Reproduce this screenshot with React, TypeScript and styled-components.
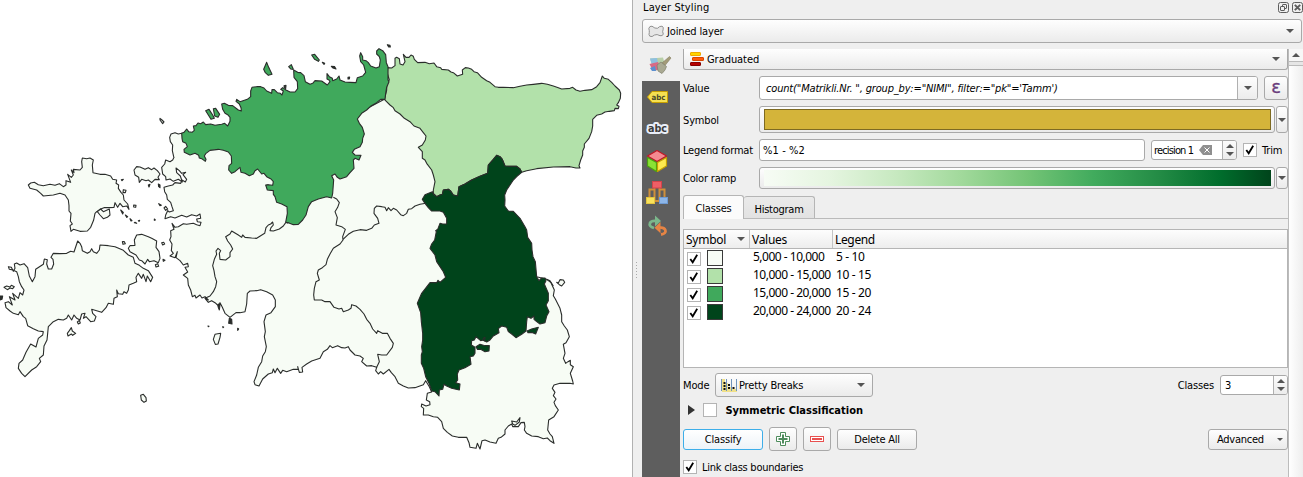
import React from "react";
import styled, { createGlobalStyle, css } from "styled-components";

const Global = createGlobalStyle`
  *, *::before, *::after { box-sizing: border-box; }
  body { margin: 0; background: #fff; overflow: hidden; }
`;

/* ---------- map ---------- */

type Sheet = "A" | "B" | "C" | "D" | "E";
type Line = [Sheet, string][];

// The outlines are digitised on five overlapping sheets at three units per pixel.
const ORIGIN: Record<Sheet, [number, number]> = {
  A: [0, 140],
  B: [160, 30],
  C: [370, 40],
  D: [190, 180],
  E: [390, 230],
};

const toPath = (line: Line, closed = true) => {
  const pts = line.flatMap(([sheet, s]) =>
    s.trim().split(/\s+/).map((p) => {
      const [x, y] = p.split(",").map(Number);
      return `${(ORIGIN[sheet][0] + x / 3).toFixed(2)} ${(ORIGIN[sheet][1] + y / 3).toFixed(2)}`;
    })
  );
  return "M" + pts.join("L") + (closed ? "Z" : "");
};

const MAINLAND: Line = [
  ["B", "65,310 55,312 45,308 33,312 29,322 31,335 38,345 37,362 41,380"],
  ["A", "522,52 518,60 510,65 497,60 494,72 485,82 488,102 497,110 498,120 510,117 520,124 535,118 547,126 541,108 530,98 528,84 538,92 545,100 557,97 549,104 560,118 556,126 546,120 542,130 525,128 518,135 505,138 492,142 494,155 500,165 502,178 512,187 516,200 520,212 508,216 503,212 497,225 495,236 512,230 525,234 545,226 560,231 575,224 590,228 600,222 602,235 590,237 592,245 603,247 600,257 590,254 580,250 560,253 550,251 535,260 525,262 516,250 522,268 512,272 513,290 509,300 516,312 514,332 520,340 510,348 525,353 532,335 528,353 540,362 550,375 563,370 565,380 555,382 563,396 550,405 563,415 565,435 572,450 577,470 585,466 588,474 600,465 606,474 615,470 625,480"],
  ["D", "45,355 55,367 65,362 75,368 86,378 90,368 97,382 105,400 120,412 138,398 150,398 165,395 170,372 172,340 180,333 200,332 212,329 230,335 248,345 256,360 256,380 243,398 228,405 222,425 224,440 226,455 223,470 229,500 226,515 218,528 215,545 205,562 200,585 192,605 195,614 207,618 218,597 235,582 247,578 250,567 255,578 262,565 272,580 278,571 290,575 310,568 325,568 323,560 328,577 338,576 336,562 350,552 365,543 390,535 400,515 412,508 420,497 427,503 443,497 455,503 465,504 475,500 480,510 495,525 510,528 520,535 515,545 530,558 545,557 560,562 557,572 565,582 572,575 580,582 597,568 604,578 615,590 625,610 640,618 655,624 675,623 700,614 707,602"],
  ["E", "118,470 125,486 112,490 109,510 119,515 120,524 108,528 95,522 94,530 101,535 100,555 115,555 130,560 143,562 155,575 160,595 172,607 187,618 205,622 230,622 237,638 240,652 258,655 262,640 270,657 276,632 285,630 300,636 318,640 325,625 333,622 345,612 345,600 355,588 365,582 368,590 385,590 393,578 403,577 405,590 403,600 410,610 425,618 445,620 460,626 472,624 480,632 492,640 487,620 480,612 473,600 476,570 492,560 505,540 496,527 492,517 498,507 490,497 495,487 487,475 492,465 510,460 540,460 550,462 548,453 541,430 550,410 541,404 541,391 534,395 527,400 520,385 525,370 520,343 528,338 538,320 532,300 523,288 515,275 515,255 510,235 496,207 490,197 493,180 483,158 470,148 440,140 300,0"],
  ["C", "300,500 120,200 43,178"],
  ["B", "500,300 200,330"],
];

const HARJU: Line = [
  ["B", "65,310 72,307 80,297 86,305 96,307 103,301 100,288 108,287 114,279 122,281 130,276 137,284 152,282 165,286 185,283 194,280 203,288 210,274 210,262 203,254 195,250 188,238 185,222 193,220 205,226 218,227 235,240 244,243 243,233 238,222 228,214 230,208 240,215 262,208 272,200 272,183 276,172 290,170 302,170 312,174 320,183 335,190 336,179 343,179 352,188 361,190 366,195 370,183 362,178 368,173 378,180 390,186 405,186 413,176 412,155 402,142 401,120 413,127 422,128 432,137 436,155 450,163 458,160 465,152 485,153 502,165 510,155 507,150 501,147 501,131 508,140 517,145 518,152 530,147 537,138 540,150 555,156 570,157 588,158 592,143 608,138 617,127 611,105 602,95 599,78 602,68 608,80 608,90 618,92 625,98 632,108 648,114 658,110 661,90 658,80 650,72 650,63 657,56 668,62 677,74 679,98 684,110 684,150 687,155 680,172 677,190 675,208 662,208 650,218 634,227 620,240 605,250 592,267 598,280 607,292 613,312 608,325 607,337 600,350 583,358 577,367 585,375 603,376 597,390 585,385 580,390 582,415 570,428 560,440 540,447 532,442 525,432 515,437 521,450 518,490 515,504 500,500 475,507 455,515 445,530 438,555 428,570 415,583 400,584 385,578 377,577 382,550 381,530 365,522 350,517 345,500 340,493 340,482 322,480 317,465 325,464 338,466 340,455 333,447 320,440 312,430 305,432 293,417 285,422 280,432 268,437 255,430 243,427 240,412 225,425 215,430 206,420 207,407 215,400 214,378 205,366 190,361 175,358 150,361 138,370 133,378 138,388 136,394 125,386 118,384 116,376 105,370 90,375 73,367 72,358 82,350 78,340 68,335 66,325"],
];

const VIRU: Line = [
  ["C", "53,83 65,84 75,77 75,55 80,52 88,56 90,72 99,75 105,65 100,43 108,52 117,52 123,45 130,49 133,58 143,68 165,67 178,71 192,69 200,80 212,83 215,88 235,90 243,96 250,98 262,108 278,103 277,90 286,83 295,84 305,88 312,95 322,98 335,112 350,122 360,127 375,140 385,142 400,142 430,143 450,139 470,135 490,133 515,130 532,133 550,138 565,143 575,147 600,145 608,142 618,150 630,154 645,151 665,149 680,140 690,128 697,108 703,115 715,118 725,127 735,138 748,150 752,160 751,175 745,188 740,195 747,199 745,206 735,205 733,212 718,214 705,216 695,222 680,226 668,238 668,258 665,275 657,295 643,312 643,322 638,333 638,345 632,360 627,377 630,384 618,384 600,380 550,381 500,386 470,392 455,397 450,387 440,379 420,379 405,378 397,358 390,350 380,346 370,358 355,375 353,400 330,409 305,420 285,432 267,440 263,468 250,465 241,452 235,448 220,450 217,463 210,465 200,470 190,460 190,450 195,425 190,405 185,390 170,370 165,360 157,355 157,335 145,322 157,315 166,300 168,288 160,278 150,265 132,258 120,245 103,235 90,222 75,212 70,203 60,195 43,178 50,150 50,130 58,120 52,100"],
];

const TARTU: Line = [
  ["C", "187,455 190,462 200,470 210,465 217,463 220,450 235,448 241,452 250,465 263,468 267,440 285,432 305,420 330,409 353,400 355,375 370,358 380,346 390,350 397,358 405,378 420,379 440,379 450,387 455,397 440,410 430,420 410,450 404,465 405,480 404,498 415,513 430,514 450,535"],
  ["E", "405,-10 410,0 413,22 425,40 426,60 429,80 436,95 440,140 447,152 455,144 465,144 468,152 463,162 475,190 475,212 468,225 477,245 470,258 465,278 450,282 440,275 432,268 432,258 423,265 412,260 410,275 408,303 395,313 378,323 365,312 355,305 350,292 335,288 325,296 327,308 310,318 300,330 290,336 280,330 272,332 258,320 253,330 245,332 244,345 255,352 255,370 250,378 240,380 243,403 225,413 207,420 202,432 203,450 197,458 210,462 208,480 185,475 170,468 162,463 158,478 148,480 147,498 135,485 125,483 118,462 107,440 101,415 94,400 94,375 97,365 95,350 98,330 98,310 94,275 92,248 82,220 95,190 120,158 140,158 144,151 150,157 167,142 160,125 150,110 140,95 135,75 120,55 125,42 134,30 139,5"],
  ["C", "197,572 203,568 210,550 218,552 230,552 230,535 220,517 210,513 185,513 175,503 165,490 157,478 165,464"],
];

const ISLANDS: Line[] = [
  [["A", "85,135 92,129 103,127 115,134 130,137 150,133 165,136 178,131 190,140 198,135 198,122 212,127 203,103 214,112 220,105 214,90 222,98 220,88 240,90 247,82 245,65 247,54 260,56 270,54 280,60 277,75 279,98 300,103 315,103 332,108 338,118 350,120 348,130 356,135 355,145 363,157 370,165 372,180 383,192 387,208 380,198 368,200 360,190 353,202 345,188 342,202 325,203 312,203 300,208 290,215 285,220 281,240 272,262 262,273 240,274 220,268 213,274 210,257 217,252 211,243 213,220 207,213 207,197 205,180 195,165 180,160 160,165 130,168 122,160 110,150 90,145"]],
  [["A", "292,215 302,207 310,215 328,207 330,225 322,232 310,236 300,225"]],
  [["A", "402,90 410,80 420,81 435,88 445,83 455,89 462,84 472,92 480,102 474,112 478,119 465,118 455,128 445,120 438,122 425,118 418,127 416,112 405,105"]],
  [["A", "25,380 34,382 40,394 45,385 43,372 50,369 60,375 72,371 83,383 88,408 97,425 105,410 107,388 130,373 133,357 142,359 140,372 145,387 155,387 161,372 159,358 153,352 160,340 180,341 200,340 212,334 222,336 228,318 233,303 240,310 245,320 247,332 262,340 270,335 275,326 280,335 290,340 298,330 300,315 325,317 345,320 370,331 385,345 400,352 405,370 418,376 430,385 445,392 458,412 452,425 442,408 438,425 430,403 425,415 415,400 408,412 410,425 400,430 387,435 385,450 380,460 372,455 368,463 355,461 350,450 352,470 342,475 340,493 325,490 318,503 305,517 290,512 275,508 278,520 288,530 283,543 272,545 258,530 250,535 255,520 245,522 240,540 230,535 222,525 215,540 205,525 200,535 190,540 175,538 160,545 145,560 143,580 141,600 132,618 130,645 118,655 122,665 110,680 95,690 75,710 65,700 55,685 57,670 68,660 78,637 92,612 108,621 115,595 128,585 130,575 115,573 100,566 83,557 77,535 70,530 60,515 55,524 40,520 30,513 18,503 15,488 25,485 37,495 28,470 45,480 38,460 55,475 60,458 68,465 72,450 65,440 58,425 55,410 50,395 38,390 28,388"]],
  [["A", "385,325 390,317 405,316 403,300 410,285 425,283 445,290 455,295 470,303 468,322 477,335 480,355 475,368 462,362 448,365 443,358 435,372 425,362 418,360 408,345 390,335"]],
  [["A", "12,442 20,438 30,441 34,436 43,440 38,446 30,444 22,449"]],
  [["A", "202,580 208,572 214,563 217,573 227,580 218,586 214,582 204,588"]],
  [["A", "422,766 430,763 438,773 439,783 432,787 424,780"]],
  [["A", "367,305 373,305 376,311 369,313"]],
  [["A", "485,308 491,307 494,312 488,315"]],
  [["A", "370,149 378,151 376,158 369,158"]],
  [["A", "401,195 408,196 407,202 401,201"]],
  [["A", "232,546 238,541 241,549 235,552"]],
  [["A", "466,374 473,371 476,379 468,381"]],
  [["A", "489,358 495,361 490,364"]],
  [["A", "492,204 497,199 503,207 497,211"]],
  [["D", "70,478 75,463 92,460 90,472 84,492 76,493"]],
  [["E", "500,157 505,159 510,149 520,150 524,157 515,168 508,164"]],
  [["E", "365,573 380,576 390,563 388,576 375,586 368,582"]],
  [["B", "0,265 6,270 12,276 8,281 0,270"]],
];

const HARJU_ISLES: Line[] = [
  [["B", "311,118 320,97 326,112 336,133 325,136 316,128"]],
  [["B", "137,242 147,238 158,255 163,265 153,268"]],
  [["B", "160,236 167,235 179,253 174,262 164,258"]],
  [["B", "455,75 464,73 478,90 475,94 464,88"]],
  [["B", "386,110 394,104 400,118 392,117"]],
];

const ROCKS: Line[] = [
  [["B", "682,44 690,46 691,51 686,51"]],
  [["B", "514,109 524,110 528,117 519,114"]],
  [["B", "487,97 494,100 492,103"]],
  [["B", "564,142 569,141 568,147 564,147"]],
  [["B", "372,167 378,166 377,176 373,173"]],
  [["A", "475,132 480,135 480,143 476,140"]],
  [["A", "364,119 370,118 366,122"]],
  [["A", "362,210 370,217 368,222"]],
  [["A", "376,225 383,230 380,232"]],
  [["A", "390,236 396,242 393,243"]],
  [["A", "403,248 410,250 405,247"]],
  [["A", "476,191 484,196 480,197"]],
  [["A", "463,237 466,240 463,241"]],
  [["A", "415,242 419,241 417,244"]],
  [["A", "0,468 8,468 6,478 0,480"]],
  [["A", "445,135 450,133 447,141"]],
  [["D", "85,372 90,375 88,390 84,380"]],
  [["D", "118,415 125,418 126,432 116,430"]],
  [["D", "54,438 57,439 55,440"]],
  [["D", "98,440 101,441 99,443"]],
  [["D", "143,445 146,447 143,451"]],
];

const TARTU_ISLES: Line[] = [
  [["E", "258,350 270,343 285,347 298,347 297,363 285,365 272,358 262,358"]],
  [["E", "411,303 425,297 445,292 437,312 428,308 414,308"]],
  [["E", "280,325 285,322 284,333 279,331"]],
];

const BORDERS: Line[] = [
  [["D", "287,128 280,138 268,147 250,153 240,152 243,143 250,135 248,126 242,132 235,135 228,143 224,160 212,167 200,175 185,174 165,172 158,165 155,172 145,165 125,153 120,162 107,170 113,183 122,195 128,207 120,218 120,230 107,240 90,238 88,220 92,212 84,205 78,213 80,223 73,238 68,257 72,272 75,290 80,305 77,320 70,335 60,348 45,355"]],
  [["D", "430,52 440,57 448,68 443,82 435,95 442,113 438,135 455,140 466,148 458,170 459,180 450,192 430,205 420,222 412,238 408,254 397,263 385,270 382,280 388,300 378,305 373,325 371,345 373,360 395,360 405,365 420,365 432,382 447,387 455,385 460,395 475,390 483,385 485,374 498,378 510,388 522,402 530,418 540,430 548,447 560,460 563,452 577,460 592,460 600,475 610,490 607,502 590,525 575,525 563,523 568,545 560,562"]],
  [["D", "459,178 475,163 490,154 510,149 530,151 545,145 553,135 567,130 563,115 552,100 553,85 560,78 575,80 585,82 590,92 595,83 603,92 610,85 620,90 632,104 640,107 650,100 655,88 665,86 675,78 690,73 708,70"]],
  [["B", "377,577 385,580"]],
  [["E", "470,148 480,152 490,168"]],
];

const MapCanvas = styled.svg`
  display: block;
  width: 632px;
  height: 477px;
  flex: none;
  background: #fff;
  stroke: #2a2d2b;
  stroke-width: 1.1;
  stroke-linejoin: round;
`;

const Shapes = ({ lines, fill, closed = true }: { lines: Line[]; fill: string; closed?: boolean }) => (
  <g fill={fill}>
    {lines.map((l, i) => (
      <path key={i} d={toPath(l, closed)} />
    ))}
  </g>
);

const CountyMap = () => (
  <MapCanvas viewBox="0 0 632 477">
    <Shapes lines={[MAINLAND, ...ISLANDS]} fill="#f7fcf5" />
    <Shapes lines={[VIRU]} fill="#b2e1aa" />
    <Shapes lines={[HARJU, ...HARJU_ISLES]} fill="#40a95c" />
    <Shapes lines={[TARTU, ...TARTU_ISLES]} fill="#00441b" />
    <Shapes lines={BORDERS} fill="none" closed={false} />
    <Shapes lines={ROCKS} fill="#2a2d2b" />
  </MapCanvas>
);

/* ---------- panel parts ---------- */

const Window = styled.main`
  display: flex;
  width: 1303px;
  height: 477px;
  overflow: hidden;
`;

const Panel = styled.aside`
  display: flex;
  flex-direction: column;
  width: 671px;
  height: 477px;
  border-left: 1px solid #b1b1b1;
  background: #efefef;
  color: #000;
  font: 11px/14px "DejaVu Sans Condensed", "DejaVu Sans", sans-serif;
  font-stretch: condensed;
  position: relative;
`;

const Text = styled.span<{ $ls?: number; $size?: number; $segoe?: boolean; $bold?: boolean; $italic?: boolean }>`
  display: inline-block;
  padding-top: 2px;
  white-space: pre;
  letter-spacing: ${(p) => p.$ls ?? -0.15}px;
  font-size: ${(p) => p.$size ?? 11}px;
  ${(p) => p.$segoe && css`font-family: "Noto Sans", "Open Sans", sans-serif; font-stretch: normal;`}
  ${(p) => p.$bold && css`font-weight: 700;`}
  ${(p) => p.$italic && css`font-style: italic;`}
`;

const TitleBar = styled.header`
  display: flex;
  align-items: center;
  height: 19px;
  padding: 0 0 5px 10px;
  svg { margin-left: 3px; }
  svg:first-of-type { margin-left: auto; }
`;

const raised = css`
  border: 1px solid #a9a9a9;
  border-radius: 3px;
  background: linear-gradient(#fefefe, #ebebeb);
`;

const Combo = styled.div<{ $w?: number; $h?: number; $clip?: boolean; $gap?: number; $pl?: number; $pr?: number }>`
  ${raised}
  display: flex;
  align-items: center;
  width: ${(p) => (p.$w ? p.$w + "px" : "auto")};
  height: ${(p) => p.$h ?? 24}px;
  padding: 0 ${(p) => p.$pr ?? 7}px 0 ${(p) => p.$pl ?? 5}px;
  gap: ${(p) => p.$gap ?? 3}px;
  ${(p) => p.$clip && css`border-top: 0; border-radius: 0 0 3px 3px;`}
  > :last-child { margin-left: auto; }
`;

const Arrow = styled.i<{ $up?: boolean; $s?: number }>`
  display: block;
  flex: none;
  width: 0;
  height: 0;
  border: ${(p) => p.$s ?? 4}px solid transparent;
  ${(p) =>
    p.$up
      ? css`border-top: 0; border-bottom-color: #555;`
      : css`border-bottom: 0; border-top-color: #555;`}
`;

const LayerRow = styled.div`
  padding: 0 1px 0 9px;
  height: 30px;
`;

const Body = styled.div`
  display: flex;
  flex: 1;
  min-height: 0;
  padding-left: 9px;
`;

const SideBar = styled.nav`
  display: flex;
  flex-direction: column;
  width: 38px;
  background: linear-gradient(#efefef 32px, #5e5e5e 32px);
  svg { display: block; }
`;

const Form = styled.section`
  display: flex;
  flex-direction: column;
  width: 605px;
  margin-left: 3px;
`;

const ScrollBar = styled.div`
  width: 15px;
  border-left: 1px solid #bcbcbc;
  background: linear-gradient(90deg, #fff, #eee);
  display: flex;
  flex-direction: column;
  align-items: center;
`;

const ScrollButton = styled.div`
  display: flex;
  align-items: center;
  justify-content: center;
  width: 100%;
  height: 13px;
  border-bottom: 1px solid #bbb;
  background: #f7f7f7;
`;

const ScrollThumb = styled.div`
  width: 100%;
  height: 4px;
  background: #e6e6e6;
  border-bottom: 1px solid #bbb;
`;

const Row = styled.div<{ $h: number; $mt?: number }>`
  display: flex;
  align-items: center;
  flex: none;
  height: ${(p) => p.$h}px;
  margin-top: ${(p) => p.$mt ?? 0}px;
`;

const Caption = styled.label`
  display: flex;
  width: 76px;
  flex: none;
`;

const Field = styled.div<{ $w: number; $h: number; $ml?: number; $pl?: number }>`
  display: flex;
  align-items: stretch;
  flex: none;
  width: ${(p) => p.$w}px;
  height: ${(p) => p.$h}px;
  margin-left: ${(p) => p.$ml ?? 0}px;
  padding-left: ${(p) => p.$pl ?? 3}px;
  border: 1px solid #a9a9a9;
  border-radius: 3px;
  background: #fff;
  > span { align-self: center; }
`;

const Steps = styled.div<{ $w: number }>`
  display: flex;
  flex-direction: column;
  align-items: center;
  justify-content: center;
  gap: 4px;
  width: ${(p) => p.$w}px;
  margin-left: auto;
  border-left: 1px solid #b0b0b0;
  border-radius: 0 2px 2px 0;
  background: linear-gradient(#fcfcfc, #ececec);
`;

const ClearSlot = styled.div`
  display: flex;
  align-items: center;
  margin-left: auto;
  margin-right: 10px;
  & + ${Steps} { margin-left: 0; }
`;

const Button = styled.button<{ $w: number; $h?: number; $ml?: number; $focus?: boolean }>`
  ${raised}
  display: flex;
  align-items: center;
  justify-content: center;
  flex: none;
  width: ${(p) => p.$w}px;
  height: ${(p) => p.$h ?? 21}px;
  margin: 0 0 0 ${(p) => p.$ml ?? 0}px;
  padding: 0;
  color: #000;
  font: inherit;
  ${(p) => p.$focus && css`border-color: #3daee9; background: linear-gradient(#fff, #edf3f8);`}
`;

const MenuButton = styled(Button)`
  justify-content: space-between;
  padding: 0 4px 0 8px;
`;

const SwatchButton = styled.div<{ $h: number }>`
  ${raised}
  flex: none;
  width: 516px;
  height: ${(p) => p.$h}px;
  padding: 2px 3px 2px 4px;
`;

const Swatch = styled.div<{ $bg: string; $line?: string }>`
  height: 100%;
  background: ${(p) => p.$bg};
  border: ${(p) => (p.$line ? `1px solid ${p.$line}` : "0")};
`;

const Check = styled.div<{ $ml?: number }>`
  width: 14px;
  height: 14px;
  flex: none;
  margin-left: ${(p) => p.$ml ?? 0}px;
  border: 1px solid #b4b4b4;
  background: #fff;
  svg { display: block; }
  & + ${Text} { margin-left: 5px; }
`;

const Tabs = styled.div`
  display: flex;
  align-items: flex-end;
  flex: none;
  height: 24px;
  margin-top: 6px;
  border-bottom: 1px solid #bababa;
`;

const Tab = styled.div<{ $active?: boolean }>`
  display: flex;
  align-items: center;
  justify-content: center;
  width: ${(p) => (p.$active ? 61 : 71)}px;
  height: ${(p) => (p.$active ? 24 : 22)}px;
  padding-top: ${(p) => (p.$active ? 0 : 2)}px;
  margin-bottom: ${(p) => (p.$active ? -1 : 0)}px;
  border: 1px solid #b5b5b5;
  border-bottom: 0;
  border-left-width: ${(p) => (p.$active ? 1 : 0)}px;
  border-radius: 3px 3px 0 0;
  background: ${(p) => (p.$active ? "#fbfbfb" : "linear-gradient(#eaeaea, #e2e2e2)")};
`;

const Table = styled.div`
  display: flex;
  flex-direction: column;
  flex: none;
  height: 139px;
  margin-top: 10px;
  border: 1px solid #b5b5b5;
  background: #fff;
`;

const columns = css`
  display: grid;
  grid-template-columns: 65px 83px 1fr;
  align-items: center;
`;

const TableHead = styled.div`
  ${columns}
  flex: none;
  height: 19px;
  border-bottom: 1px solid #b5b5b5;
  background: linear-gradient(#fdfdfd, #ededed);
`;

const HeadCell = styled.div`
  display: flex;
  align-items: center;
  justify-content: space-between;
  height: 18px;
  padding: 0 4px 0 2px;
  & + & { border-left: 1px solid #c4c4c4; }
`;

const TableRow = styled.div`
  ${columns}
  height: 18px;
  > span { padding-left: 4px; margin-top: -5px; }
`;

const SymbolCell = styled.div`
  display: flex;
  align-items: center;
  gap: 6px;
  padding: 1px 0 0 3px;
`;

const ClassColor = styled.div<{ $bg: string }>`
  width: 16px;
  height: 16px;
  margin-top: -2px;
  border: 1px solid #3a3a3a;
  background: ${(p) => p.$bg};
`;

const Grip = styled.div`
  position: absolute;
  left: 3px;
  top: 262px;
  width: 1px;
  height: 16px;
  background: repeating-linear-gradient(#aaa 0 1px, transparent 1px 3px);
`;

/* ---------- icons ---------- */

const TickMark = () => (
  <svg width="12" height="12" viewBox="0 0 12 12" fill="none" stroke="#000" strokeWidth="1.8">
    <path d="M2.3 6 4.7 9.3 9.2 1.8" />
  </svg>
);

const SidebarIcons = () => (
  <svg width="38" height="200" viewBox="0 0 38 200">
    {/* brush over a colour patch */}
    <path d="M8 9.500 21 8.500 24 19 12 22Z" fill="#b9cfa8" />
    <path d="M8 9.500 15 9 16 14 10 16Z" fill="#8ec0e0" />
    <path d="M7.500 15 16 13 19 20 11 22Z" fill="#d96a85" />
    <path d="M8 19 13 17 14 22 10 22Z" fill="#5b8fd0" />
    <path d="M20 14 27.500 7.500 29 9 23 16.500Z" fill="#a39b78" stroke="#857e61" strokeWidth=".6" />
    <path d="M15 16 19 13 24.500 17.500 23 21 20 24.500 16 22Z" fill="#a9a992" stroke="#7f7f6c" strokeWidth=".7" />
    {/* label tag */}
    <path d="M10 42.500H25.500V53.500H10L5.500 48Z" fill="#f5e052" stroke="#c9a000" strokeWidth="1" strokeLinejoin="round" />
    <text x="9.500" y="51.300" fontSize="7.500" fontWeight="700" fill="#4a4a2a" textLength="14" lengthAdjust="spacingAndGlyphs" fontFamily="DejaVu Sans">abc</text>
    {/* mask label */}
    <text x="6" y="82.500" fontSize="10.500" fontWeight="700" fill="#3c3c3c" stroke="#e9eef8" strokeWidth="4" strokeLinejoin="round" paintOrder="stroke" textLength="19" lengthAdjust="spacingAndGlyphs" fontFamily="DejaVu Sans">abc</text>
    {/* 3d cube */}
    <g strokeLinejoin="round" strokeWidth="1.200">
      <path d="M15 101.500 24.500 107 15 112.500 5.500 107Z" fill="#f58a90" stroke="#c01825" />
      <path d="M5.500 108.500 14.500 113.500V122.500L5.500 117Z" fill="#8ae234" stroke="#4ca010" />
      <path d="M24.500 108.500 15.500 113.500V122.500L24.500 117Z" fill="#fce94f" stroke="#c4a000" />
    </g>
    {/* diagram tree */}
    <g fill="none" stroke="#cf8f3a" strokeWidth="2">
      <path d="M12.500 138V152M17.500 138V152M7.500 149V140.500M22.500 149V140.500M6.500 140.500H13M17 140.500H23.500M12 152H18" />
    </g>
    <rect x="10.500" y="132.500" width="9" height="6.500" fill="#ef5f66" stroke="#d4434b" />
    <rect x="4.500" y="148.500" width="8" height="6" fill="#f8e25c" stroke="#e3c53f" />
    <rect x="17.500" y="148.500" width="8" height="6" fill="#8db6e8" stroke="#6f9bd3" />
    {/* undo and redo */}
    <g fill="none" strokeWidth="2.800">
      <path d="M12 179Q6.500 177.500 8 174Q9.500 171.500 14 172" stroke="#7bb78b" />
      <path d="M19 185.500Q24.500 184.500 23.300 181Q22 178.200 18 178.700" stroke="#e68444" />
    </g>
    <path d="M13 166.500 19 172 13 177.500Z" fill="#7bb78b" />
    <path d="M18.500 173 12.500 178.700 18.500 184.300Z" fill="#e68444" />
  </svg>
);

const PolygonIcon = () => (
  <svg width="16" height="13" viewBox="0 0 16 13">
    <path d="M.8 3.500Q1.500 .8 4 1.200Q7 3.800 9.500 3.300Q11.500 .9 14 1.200Q15.800 1.800 15.200 4.200Q14 6.800 15.300 9Q14.800 11.300 12 10.700Q9 8.800 6.500 10Q4 12.500 1.800 11.200Q.4 9.800 1.300 7.500Q1.500 5.500.8 3.500Z" fill="#e6e6e6" stroke="#919191" />
  </svg>
);

const GraduatedIcon = () => (
  <svg width="14" height="14" viewBox="0 0 14 14">
    <rect x=".5" y=".5" width="10" height="3" rx=".5" fill="#ffd500" stroke="#f0a800" />
    <rect x="2.500" y="5.500" width="11" height="3" rx=".5" fill="#ff5a0a" stroke="#d94400" />
    <rect x=".5" y="10.500" width="10" height="3" rx=".5" fill="#b80000" stroke="#860000" />
  </svg>
);

const HistogramIcon = () => (
  <svg width="16" height="13" viewBox="0 0 16 13">
    <path d="M1 0H4V4H7V8H11V10H16V13H1Z" fill="#f0e08a" />
    <path d="M.5 0V12M5.500 0V12M10.500 0V12M15.500 0V12" stroke="#6f93bb" />
    <path d="M3.500 3V11M8 5V11M12.500 8V11" stroke="#111" strokeWidth="2" strokeDasharray="2 1" />
  </svg>
);

const FloatIcon = () => (
  <svg width="11" height="11" viewBox="0 0 11 11" fill="none" stroke="#5d5d5d">
    <rect x=".5" y=".5" width="10" height="10" rx="2" />
    <rect x="4.500" y="2.500" width="4" height="4" rx=".5" />
    <rect x="2.500" y="4.500" width="4" height="4" rx=".5" fill="#efefef" />
  </svg>
);

const CloseIcon = () => (
  <svg width="11" height="11" viewBox="0 0 11 11" fill="none" stroke="#5d5d5d">
    <rect x=".5" y=".5" width="10" height="10" rx="2" />
    <path d="M2.800 2.800 8.200 8.200M8.200 2.800 2.800 8.200" strokeWidth="1.900" />
  </svg>
);

const ClearIcon = () => (
  <svg width="13" height="10" viewBox="0 0 13 10">
    <path d="M4 0H13V10H4L0 5Z" fill="#8f8f8f" />
    <path d="M5.500 2.500 10.500 7.500M10.500 2.500 5.500 7.500" stroke="#fff" />
  </svg>
);

const PlusIcon = () => (
  <svg width="14" height="14" viewBox="0 0 14 14" fill="#fff" stroke="#4e8c5c">
    <path d="M4.500.5H9.500V4.500H13.500V9.500H9.500V13.500H4.500V9.500H.5V4.500H4.500Z" />
    <path d="M7 2.500V11.500M2.500 7H11.500" strokeWidth="2" />
  </svg>
);

const MinusIcon = () => (
  <svg width="14" height="6" viewBox="0 0 14 6" fill="#fff" stroke="#e8504f">
    <rect x=".5" y=".5" width="13" height="5" />
    <path d="M2 3H12" strokeWidth="2" />
  </svg>
);

/* ---------- panel ---------- */

const CLASSES = [
  { color: "#f7fcf5", values: "5,000 - 10,000", legend: "5 - 10" },
  { color: "#b2e1aa", values: "10,000 - 15,000", legend: "10 - 15" },
  { color: "#40a95c", values: "15,000 - 20,000", legend: "15 - 20" },
  { color: "#00441b", values: "20,000 - 24,000", legend: "20 - 24" },
];

const GREENS =
  "linear-gradient(90deg, #f7fcf5, #e5f5e0 13%, #c7e9c0 26%, #a1d99b 39%, #74c476 52%, #41ab5d 65%, #238b45 78%, #006d2c 90%, #00441b)";

const ValueField = styled(Field)`
  ${Arrow} { margin: auto; }
`;

const DropCell = styled.div`
  display: flex;
  width: 20px;
  margin-left: auto;
  border-left: 1px solid #b0b0b0;
  border-radius: 0 2px 2px 0;
  background: linear-gradient(#fdfdfd, #ececec);
`;

const Epsilon = styled.span`
  color: #6a3d7c;
  font: 400 18px/18px "DejaVu Sans", sans-serif;
  -webkit-text-stroke: 0.3px #6a3d7c;
  margin-top: -3px;
`;

const Expander = styled.i`
  width: 0;
  height: 0;
  margin-left: 5px;
  border: 5.5px solid transparent;
  border-left: 7px solid #333;
  border-right: 0;
`;

const End = styled.div`
  display: flex;
  align-items: center;
  margin-left: auto;
`;

const Mode = styled.div`
  display: flex;
  width: 32px;
  flex: none;
`;

export default function App() {
  return (
    <>
      <Global />
      <Window>
        <CountyMap />
        <Panel>
          <Grip />
          <TitleBar>
            <Text $ls={0.12}>Layer Styling</Text>
            <FloatIcon />
            <CloseIcon />
          </TitleBar>
          <LayerRow>
            <Combo>
              <PolygonIcon />
              <Text>Joined layer</Text>
              <Arrow />
            </Combo>
          </LayerRow>
          <Body>
            <SideBar>
              <SidebarIcons />
            </SideBar>
            <Form>
              <Combo $h={21} $clip $pl={6}>
                <GraduatedIcon />
                <Text $ls={-0.05}>Graduated</Text>
                <Arrow />
              </Combo>
              <Row $h={24} $mt={6}>
                <Caption><Text>Value</Text></Caption>
                <ValueField $w={499} $h={24} $pl={6}>
                  <Text $italic $ls={-0.17}>count("Matrikli.Nr. ", group_by:="NIMI", filter:="pk"='Tamm')</Text>
                  <DropCell><Arrow /></DropCell>
                </ValueField>
                <Button $w={24} $h={24} $ml={6}><Epsilon>ε</Epsilon></Button>
              </Row>
              <Row $h={27} $mt={6}>
                <Caption><Text>Symbol</Text></Caption>
                <SwatchButton $h={27}><Swatch $bg="#d4b43a" $line="#7d6a22" /></SwatchButton>
                <Button $w={12} $h={27} $ml={1}><Arrow /></Button>
              </Row>
              <Row $h={22} $mt={6}>
                <Caption><Text $ls={-0.2}>Legend format</Text></Caption>
                <Field $w={386} $h={22}><Text $ls={0.1}>%1 - %2</Text></Field>
                <Field $w={86} $h={20} $ml={6} $pl={2}>
                  <Text $ls={-0.85}>recision 1</Text>
                  <ClearSlot><ClearIcon /></ClearSlot>
                  <Steps $w={14}><Arrow $up /><Arrow /></Steps>
                </Field>
                <Check $ml={6}><TickMark /></Check>
                <Text>Trim</Text>
              </Row>
              <Row $h={22} $mt={6}>
                <Caption><Text $ls={-0.2}>Color ramp</Text></Caption>
                <SwatchButton $h={22}><Swatch $bg={GREENS} /></SwatchButton>
                <Button $w={12} $h={22} $ml={1}><Arrow /></Button>
              </Row>
              <Tabs>
                <Tab $active><Text>Classes</Text></Tab>
                <Tab><Text $ls={-0.25}>Histogram</Text></Tab>
              </Tabs>
              <Table>
                <TableHead>
                  <HeadCell><Text $segoe $size={12} $ls={-0.25}>Symbol</Text><Arrow /></HeadCell>
                  <HeadCell><Text $segoe $size={12} $ls={-0.3}>Values</Text></HeadCell>
                  <HeadCell><Text $segoe $size={12} $ls={-0.35}>Legend</Text></HeadCell>
                </TableHead>
                {CLASSES.map((c) => (
                  <TableRow key={c.values}>
                    <SymbolCell><Check><TickMark /></Check><ClassColor $bg={c.color} /></SymbolCell>
                    <Text $segoe $size={12} $ls={-0.5}>{c.values}</Text>
                    <Text $segoe $size={12} $ls={-0.35}>{c.legend}</Text>
                  </TableRow>
                ))}
              </Table>
              <Row $h={24} $mt={5}>
                <Mode><Text>Mode</Text></Mode>
                <Combo $w={158} $gap={2}>
                  <HistogramIcon />
                  <Text>Pretty Breaks</Text>
                  <Arrow />
                </Combo>
                <End>
                  <Text>Classes</Text>
                  <Field $w={68} $h={20} $ml={6} $pl={4}>
                    <Text>3</Text>
                    <Steps $w={14}><Arrow $up /><Arrow /></Steps>
                  </Field>
                </End>
              </Row>
              <Row $h={14} $mt={6}>
                <Expander />
                <Check $ml={8} />
                <Text $bold $ls={0}>{" Symmetric Classification"}</Text>
              </Row>
              <Row $h={24} $mt={10}>
                <Button $w={80} $focus><Text>Classify</Text></Button>
                <Button $w={28} $h={24} $ml={6}><PlusIcon /></Button>
                <Button $w={28} $h={24} $ml={6}><MinusIcon /></Button>
                <Button $w={80} $ml={6}><Text $ls={-0.25}>Delete All</Text></Button>
                <End>
                  <MenuButton $w={80}><Text $ls={-0.25}>Advanced</Text><Arrow $s={3} /></MenuButton>
                </End>
              </Row>
              <Row $h={14} $mt={9}>
                <Check><TickMark /></Check>
                <Text $ls={-0.25}>Link class boundaries</Text>
              </Row>
            </Form>
            <ScrollBar>
              <ScrollButton><Arrow $up /></ScrollButton>
              <ScrollThumb />
            </ScrollBar>
          </Body>
        </Panel>
      </Window>
    </>
  );
}
